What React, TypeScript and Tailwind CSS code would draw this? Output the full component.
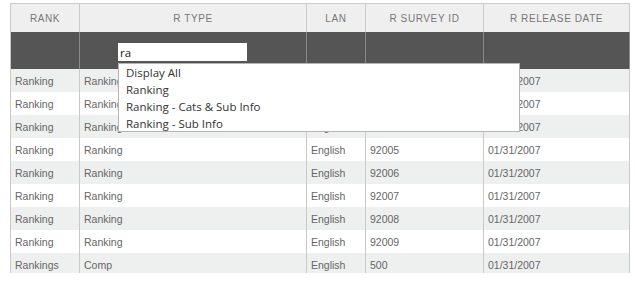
const columns = [
  { key: 'rank', label: 'RANK', width: 'w-[69px]' },
  { key: 'type', label: 'R TYPE', width: 'w-[227px]' },
  { key: 'lan', label: 'LAN', width: 'w-[59px]' },
  { key: 'survey', label: 'R SURVEY ID', width: 'w-[118px]' },
  { key: 'date', label: 'R RELEASE DATE', width: 'w-[146px]' },
];

const rows = [
  ['Ranking', 'Ranking', 'English', '92002', '01/31/2007'],
  ['Ranking', 'Ranking', 'English', '92003', '01/31/2007'],
  ['Ranking', 'Ranking', 'English', '92004', '01/31/2007'],
  ['Ranking', 'Ranking', 'English', '92005', '01/31/2007'],
  ['Ranking', 'Ranking', 'English', '92006', '01/31/2007'],
  ['Ranking', 'Ranking', 'English', '92007', '01/31/2007'],
  ['Ranking', 'Ranking', 'English', '92008', '01/31/2007'],
  ['Ranking', 'Ranking', 'English', '92009', '01/31/2007'],
  ['Rankings', 'Comp', 'English', '500', '01/31/2007'],
];

const suggestions = ['Display All', 'Ranking', 'Ranking - Cats & Sub Info', 'Ranking - Sub Info'];

export default function App() {
  return (
    <div className="relative w-[635px] h-[283px] bg-white overflow-hidden">
      <div className="ml-[10px] mt-[3px] w-[620px] h-[270px] overflow-hidden border-l border-t border-[#c9c9c9]">
        {/* header */}
        <div className="flex h-[28px] bg-[#efefef] text-[10px] tracking-[0.6px] text-[#777] font-['Liberation_Sans',Arial,sans-serif]">
          {columns.map((c) => (
            <div key={c.key} className={`${c.width} flex items-center justify-center pt-[1px] border-r border-[#c9c9c9]`}>
              {c.label}
            </div>
          ))}
        </div>

        {/* filter row */}
        <div className="flex h-[37px] bg-[#555555]">
          {columns.map((c) => (
            <div key={c.key} className={`${c.width} border-r border-[#8a8a8a]`}>
              {c.key === 'type' && (
                <input
                  value="ra"
                  readOnly
                  className="mt-[11px] ml-[38px] w-[129px] h-[18px] bg-white px-[2px] text-[11.5px] text-[#222] outline-none font-['Open_Sans','Noto_Sans',sans-serif]"
                />
              )}
            </div>
          ))}
        </div>

        {/* data */}
        {rows.map((r, i) => (
          <div
            key={i}
            className={`flex h-[23px] text-[10.5px] text-[#666] font-['Liberation_Sans',Arial,sans-serif] ${
              i % 2 === 0 ? 'bg-[#eeefef]' : 'bg-white'
            }`}
          >
            {columns.map((c, j) => (
              <div key={c.key} className={`${c.width} flex items-center pt-[2px] pl-[4px] border-r border-[#c9c9c9]`}>
                {r[j]}
              </div>
            ))}
          </div>
        ))}
      </div>

      {/* autocomplete menu */}
      <div className="absolute left-[118px] top-[63px] w-[402px] h-[69px] bg-white border border-[#b5b5b5] font-['Open_Sans','Noto_Sans',sans-serif] text-[11.5px] text-[#333]">
        {suggestions.map((s) => (
          <div key={s} className="h-[17px] leading-[17px] pl-[7px]">
            {s}
          </div>
        ))}
      </div>
    </div>
  );
}
